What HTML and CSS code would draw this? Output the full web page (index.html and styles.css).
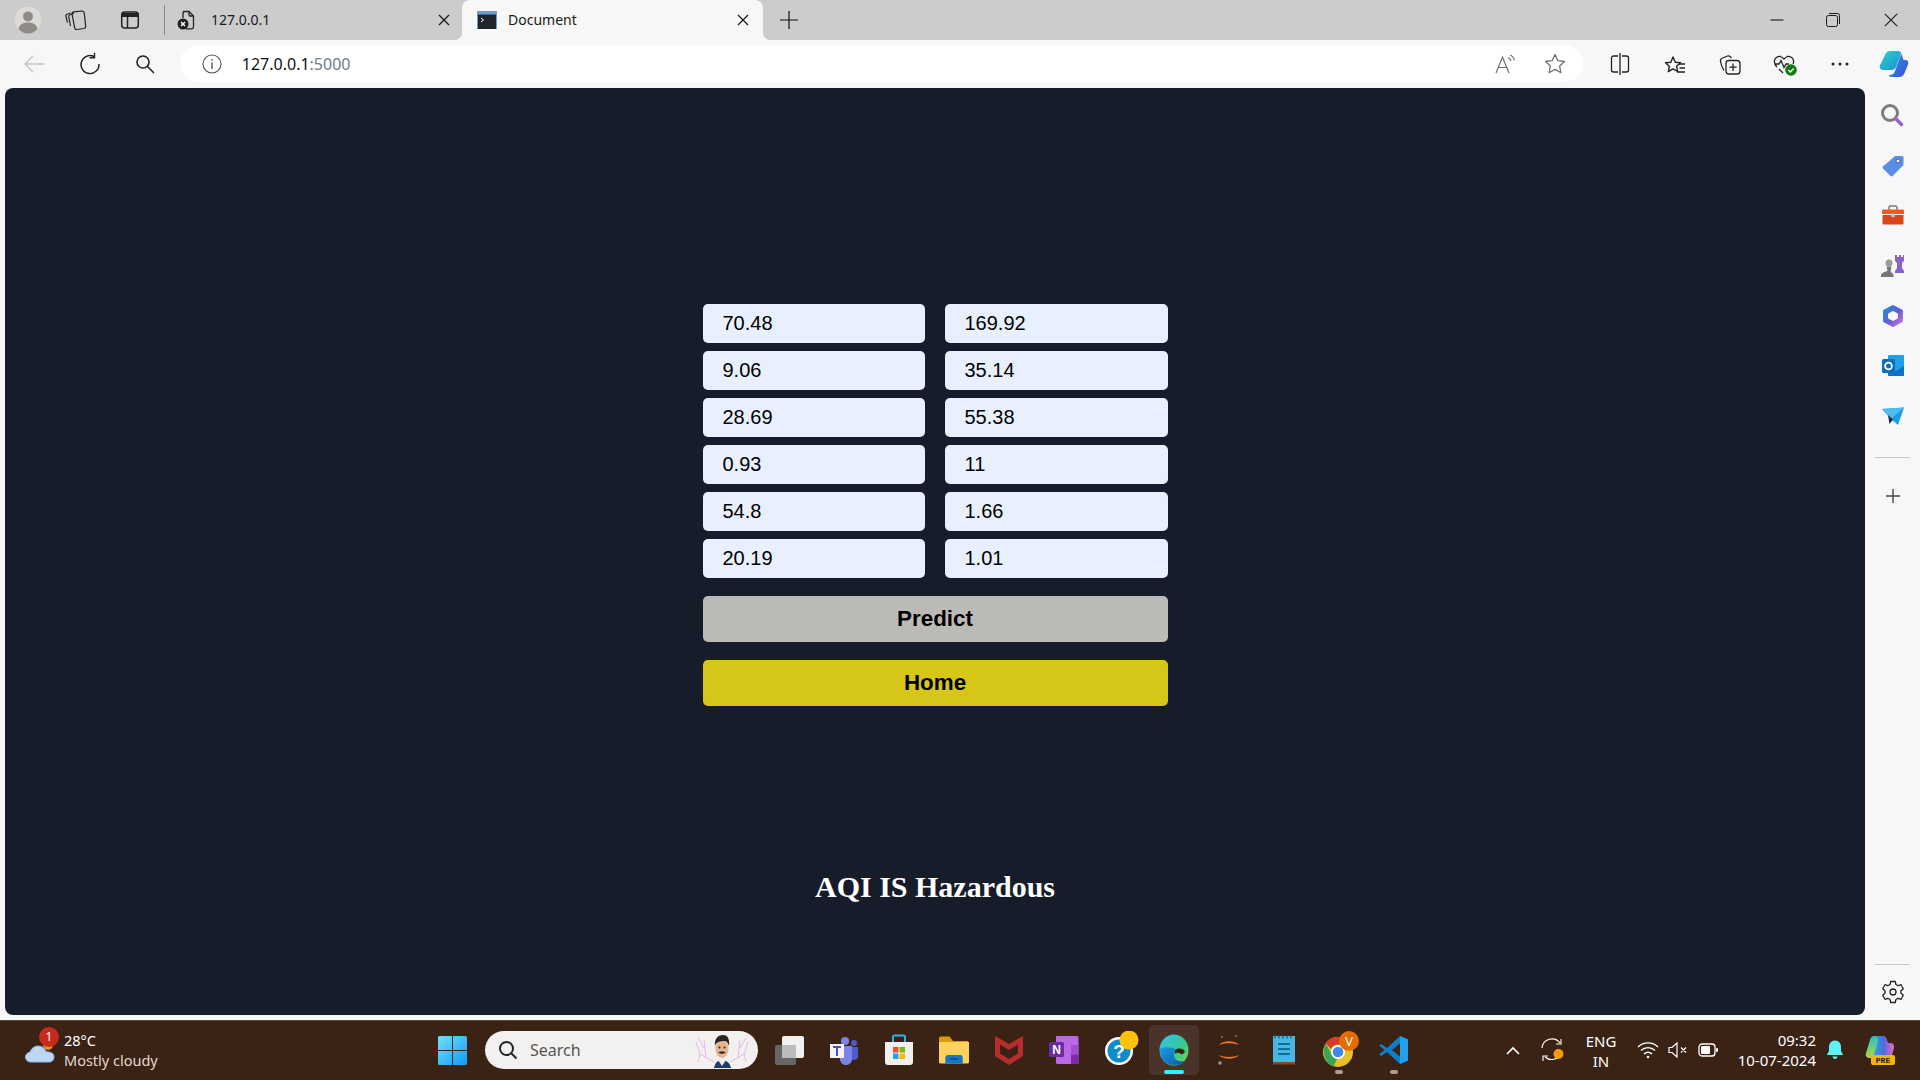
FILE: index.html
```html
<!DOCTYPE html>
<html lang="en">
<head>
    <meta charset="UTF-8">
    <meta name="viewport" content="width=device-width, initial-scale=1.0">
    <title>Document</title>
    <link rel="stylesheet" href="styles.css">
</head>
<body>
    <!-- browser tabs -->
    <div class="tabbar">
        <div class="tb-avatar">
            <svg width="28" height="28" viewBox="0 0 28 28"><circle cx="14" cy="14" r="13.500" fill="#dcdad6"/><circle cx="14" cy="10.500" r="5" fill="#8f8b86"/><path d="M4.500 23c1-5 5-6.500 9.500-6.500s8.500 1.500 9.500 6.500c-2.500 3-6 4.500-9.500 4.500s-7-1.500-9.500-4.500z" fill="#8f8b86"/></svg>
        </div>
        <div class="tb-coll">
            <svg width="24" height="24" viewBox="0 0 24 24" fill="none" stroke="#222" stroke-width="1.200"><path d="M3.500 14.500L2 8.500c-.3-1.200.3-2.200 1.500-2.500l3-1"/><path d="M6.500 18L4.800 9c-.2-1.300.4-2.200 1.700-2.500L10 5.500"/><path d="M10 3.800l8-.8c1.200 0 2 .6 2.200 1.800l1.500 13.500c.1 1.200-.6 2-1.800 2.200l-7 1c-1.200.1-2-.5-2.200-1.700L8 6c-.1-1.200.7-2 2-2.200z"/></svg>
        </div>
        <div class="tb-panel">
            <svg width="20" height="20" viewBox="0 0 20 20"><rect x="1.700" y="2" width="16.600" height="16" rx="3" fill="none" stroke="#222" stroke-width="1.500"/><path d="M2 3h16v4H2z" fill="#222"/><path d="M7.500 7v11" stroke="#222" stroke-width="1.500"/></svg>
        </div>
        <div class="tb-sep"></div>
        <div class="tab">
            <svg class="favicon" width="18" height="20" viewBox="0 0 18 20"><path d="M6 1.500h6l4.500 4.500v11a1.800 1.800 0 0 1-1.800 1.800H9" fill="none" stroke="#222" stroke-width="1.300"/><path d="M6 8V3.300A1.800 1.800 0 0 1 7 1.600M12 1.500v3.200c0 .8.500 1.300 1.300 1.300h3.200" fill="none" stroke="#222" stroke-width="1.300"/><circle cx="6" cy="14" r="5.500" fill="#222"/><path d="M4 12l4 4M8 12l-4 4" stroke="#fff" stroke-width="1.400"/></svg>
            <span class="tab-title">127.0.0.1</span>
            <svg class="tab-close" width="12" height="12" viewBox="0 0 12 12"><path d="M1 1l10 10M11 1L1 11" stroke="#1a1a1a" stroke-width="1.300"/></svg>
        </div>
        <div class="tab tab-active">
            <svg class="favicon" width="20" height="20" viewBox="0 0 20 20"><rect x=".5" y="1" width="19" height="18" fill="#20242b"/><rect x=".5" y="1" width="19" height="3.500" fill="#6d9bd6"/><path d="M.5 4v15M19.500 4v15" stroke="#6d9bd6"/><path d="M4 8l2.500 2L4 12" fill="none" stroke="#fff"/></svg>
            <span class="tab-title">Document</span>
            <svg class="tab-close" width="12" height="12" viewBox="0 0 12 12"><path d="M1 1l10 10M11 1L1 11" stroke="#1a1a1a" stroke-width="1.300"/></svg>
        </div>
        <div class="tb-new">
            <svg width="20" height="20" viewBox="0 0 20 20"><path d="M1 10h18M10 1v18" stroke="#111" stroke-width="1.200"/></svg>
        </div>
        <div class="win-controls">
            <div class="win-btn win-min"><svg width="14" height="14" viewBox="0 0 14 14"><path d="M.5 7h13" stroke="#1a1a1a" stroke-width="1.100"/></svg></div>
            <div class="win-btn"><svg width="14" height="14" viewBox="0 0 14 14" fill="none" stroke="#1a1a1a" stroke-width="1"><rect x=".5" y="2.500" width="11" height="11" rx="2"/><path d="M3 .5h8.500a2 2 0 0 1 2 2V11"/></svg></div>
            <div class="win-btn"><svg width="14" height="14" viewBox="0 0 14 14"><path d="M.8.8l12.400 12.400M13.200.8L.8 13.200" stroke="#1a1a1a" stroke-width="1.100"/></svg></div>
        </div>
    </div>

    <!-- address bar row -->
    <div class="toolbar">
        <div class="tool tool-back">
            <svg width="22" height="20" viewBox="0 0 22 20"><path d="M21 10H2M10 2l-8 8 8 8" fill="none" stroke="#c4c4c4" stroke-width="1.400"/></svg>
        </div>
        <div class="tool tool-reload">
            <svg width="22" height="24" viewBox="0 0 22 24" fill="none" stroke="#222" stroke-width="1.400"><path d="M15 4.500A9 9 0 1 0 20 12"/><path d="M15.500 0.800v5h-5"/></svg>
        </div>
        <div class="tool tool-zoom">
            <svg width="20" height="20" viewBox="0 0 20 20" fill="none" stroke="#222" stroke-width="1.600"><circle cx="8" cy="8" r="6"/><path d="M12.500 12.500l6.500 6.500"/></svg>
        </div>
        <div class="address">
            <svg width="20" height="20" viewBox="0 0 20 20" fill="none" stroke="#555" stroke-width="1.100"><circle cx="10" cy="10" r="9"/><path d="M10 8.500V15M10 5v1.500" stroke-width="1.400"/></svg>
            <span class="url">127.0.0.1<span class="url-port">:5000</span></span>
            <div class="address-right">
                <svg width="22" height="20" viewBox="0 0 22 20" fill="none" stroke="#707070" stroke-width="1.200"><path d="M1 19L7.500 3 14 19M3.300 13.500h8.400"/><path d="M13 3.500c1.700.7 2.700 1.800 3 3.500M15 1c2.500 1 4 3 4.500 5.500"/></svg>
                <svg width="22" height="22" viewBox="0 0 22 22"><path d="M11 1.500l2.900 6.200 6.600.8-4.900 4.500 1.300 6.700L11 16.400l-5.900 3.300 1.300-6.700L1.500 8.500l6.600-.8z" fill="none" stroke="#707070" stroke-width="1.300" stroke-linejoin="round"/></svg>
            </div>
        </div>
        <div class="tools-right">
            <div class="tool-r"><svg width="20" height="22" viewBox="0 0 20 22" fill="none" stroke="#222" stroke-width="1.300"><path d="M8 3H3.500A2 2 0 0 0 1.500 5v12a2 2 0 0 0 2 2H8M12 3h4.500a2 2 0 0 1 2 2v12a2 2 0 0 1-2 2H12M10 0v22"/></svg></div>
            <div class="tool-r"><svg width="22" height="22" viewBox="0 0 22 22" fill="none" stroke="#222" stroke-width="1.400"><path d="M9 2l2.300 5.300 5.200.5-3.900 3.500 1 5.200L9 13.800l-4.700 2.800 1.100-5.200L1.500 7.800l5.300-.5z" stroke-linejoin="round" transform="translate(0 2)"/><path d="M15 11h6M15.500 15h5.500M13 19h8"/></svg></div>
            <div class="tool-r"><svg width="22" height="22" viewBox="0 0 22 22" fill="none" stroke="#222" stroke-width="1.300"><rect x="7" y="7.500" width="14" height="13.500" rx="3"/><path d="M14 10.500v7.500M10.300 14.200h7.400"/><path d="M5 17.500c-1.300-2-3-6-3.500-9-.3-1.800.5-3 2-3.500l5-2c1.500-.5 3 0 4 2"/></svg></div>
            <div class="tool-r">
                <svg width="24" height="24" viewBox="0 0 24 24"><path d="M4 15c-2-2-3-4-2.500-6.500C2 5.500 5 4 7.500 4.500 9 5 10 6 11 7c1-1 2-2 3.500-2.500C17 4 20 5.500 20.500 8.500c.2 1.500 0 2.500-.5 3.500M1.500 12H6l2-3.500 3 7 2-3.500h3M6 17l4 4" fill="none" stroke="#222" stroke-width="1.300"/><circle cx="18" cy="18" r="5.800" fill="#107c10"/><path d="M15.300 18l2 2 3.400-3.500" fill="none" stroke="#fff" stroke-width="1.400"/></svg>
            </div>
            <div class="tool-r"><svg width="20" height="6" viewBox="0 0 20 6" fill="#222"><circle cx="3" cy="3" r="1.500"/><circle cx="10" cy="3" r="1.500"/><circle cx="17" cy="3" r="1.500"/></svg></div>
            <div class="tool-r tool-copilot">
                <svg width="30" height="28" viewBox="0 0 30 28"><defs><linearGradient id="cpa" x1="0" y1="0" x2="1" y2="1"><stop offset="0" stop-color="#2ad3c8"/><stop offset="1" stop-color="#1b8fd8"/></linearGradient><linearGradient id="cpb" x1="0" y1="0" x2="1" y2="1"><stop offset="0" stop-color="#2e9be8"/><stop offset="1" stop-color="#3b4fd6"/></linearGradient></defs><path d="M11 1h8c1.500 0 2.500 1 3 2.500L17 17c-.8 2-2.500 3-4.500 3H4c-2.500 0-4-2.500-3-5L6 5c.8-2.500 3-4 5-4z" fill="url(#cpa)"/><path d="M19 1c2 0 3 1 3.500 3l2 6h2c2 0 3.500 2 2.500 4.500L26 22c-1 3-3 5-6 5h-7c-2 0-3-1-3-2 3 0 5-1 6-4L22 4c-.5-2-1.500-3-3-3z" fill="url(#cpb)"/></svg>
            </div>
        </div>
    </div>

    <div class="main">
        <div class="page">
            <form class="predict-form">
                <div class="fields">
                    <input type="text" value="70.48">
                    <input type="text" value="169.92">
                    <input type="text" value="9.06">
                    <input type="text" value="35.14">
                    <input type="text" value="28.69">
                    <input type="text" value="55.38">
                    <input type="text" value="0.93">
                    <input type="text" value="11">
                    <input type="text" value="54.8">
                    <input type="text" value="1.66">
                    <input type="text" value="20.19">
                    <input type="text" value="1.01">
                </div>
                <button type="submit" class="btn btn-predict">Predict</button>
                <button type="button" class="btn btn-home">Home</button>
            </form>
            <h2 class="result">AQI IS Hazardous</h2>
        </div>

        <!-- edge sidebar -->
        <div class="sidebar">
            <svg class="side-first" width="24" height="24" viewBox="0 0 24 24"><circle cx="10" cy="10" r="7.500" fill="none" stroke="#7c7c7c" stroke-width="3"/><path d="M15.500 15.500l6 6" stroke="#9a62c8" stroke-width="3.500" stroke-linecap="round"/></svg>
            <svg width="24" height="24" viewBox="0 0 24 24"><path d="M14 2h7a1.500 1.500 0 0 1 1.500 1.500V11L11.500 22a1.500 1.500 0 0 1-2 0L2 14.500a1.500 1.500 0 0 1 0-2z" fill="#5a8ee6"/><circle cx="17" cy="7" r="2" fill="#fff" stroke="#3557a8"/></svg>
            <svg width="24" height="24" viewBox="0 0 24 24"><path d="M8 6V3.500A1.500 1.500 0 0 1 9.500 2h5A1.500 1.500 0 0 1 16 3.500V6" fill="none" stroke="#7a7a7a" stroke-width="1.500"/><path d="M1 7c0-1 .5-1.500 1.500-1.500h19c1 0 1.500.5 1.500 1.500v3H1z" fill="#ea5a23"/><path d="M1.500 11h21v8c0 1-.5 1.500-1.500 1.500H3c-1 0-1.500-.5-1.500-1.500z" fill="#d8461a"/><circle cx="12" cy="11.500" r="2" fill="#c9c4bf"/></svg>
            <svg width="24" height="24" viewBox="0 0 24 24"><path d="M14 1h2v2h2V1h2v2h2V1h1v6l-2 2v5l2 3v2h-9v-2l2-3V9l-2-2z" fill="#8a62c4"/><circle cx="8" cy="9" r="3.500" fill="#9a9a9a"/><path d="M5.500 12.500h5l-1 5 3 3v2.500H0v-2.500l3-2.500 3.500-1z" fill="#777"/></svg>
            <svg width="24" height="24" viewBox="0 0 24 24"><defs><linearGradient id="m3" x1="0" y1="0" x2="1" y2="1"><stop offset="0" stop-color="#1f8fd8"/><stop offset=".55" stop-color="#6a5bd0"/><stop offset="1" stop-color="#c77ee0"/></linearGradient></defs><path d="M12 2.500l8.500 4.500v10L12 21.500 3.500 17V7z" fill="url(#m3)" stroke="url(#m3)" stroke-width="3" stroke-linejoin="round"/><path d="M12 7.500l4.500 2.300v4.400L12 16.500l-4.500-2.300V9.800z" fill="#f7f7f7" stroke="#f7f7f7" stroke-linejoin="round"/></svg>
            <svg width="24" height="24" viewBox="0 0 24 24"><path d="M8 1h14a1 1 0 0 1 1 1v19a1 1 0 0 1-1 1H8a1 1 0 0 1-1-1V2a1 1 0 0 1 1-1z" fill="#1fa0e4"/><path d="M7 12l8 5 8-5v9a1 1 0 0 1-1 1H8a1 1 0 0 1-1-1z" fill="#0d73c4"/><rect x="1" y="5" width="13" height="14" rx="1.500" fill="#0f6cbd"/><circle cx="7.500" cy="12" r="3.400" fill="none" stroke="#fff" stroke-width="1.800"/></svg>
            <svg width="24" height="24" viewBox="0 0 24 24"><path d="M1 5l22-1.500L17 21l-7-6z" fill="#1b9de2"/><path d="M1 5l9 10 13-11.500z" fill="#4dbdf0"/><path d="M7 11l1.500 9 3.500-4.500z" fill="#1d2a52"/></svg>
            <div class="side-divider side-divider-mid"></div>
            <svg width="24" height="24" viewBox="0 0 24 24"><path d="M5 12h14M12 5v14" stroke="#444" stroke-width="1.400"/></svg>
            <div class="side-bottom">
                <div class="side-divider"></div>
                <svg width="24" height="24" viewBox="0 0 24 24"><path d="M9.700 1.500h4.600l.6 3 2.200 1.200 2.900-1 2.300 4-2.300 2v2.600l2.300 2-2.300 4-2.900-1-2.200 1.200-.6 3H9.700l-.6-3-2.200-1.200-2.900 1-2.300-4 2.300-2v-2.600l-2.300-2 2.300-4 2.900 1 2.200-1.200z" fill="none" stroke="#222" stroke-width="1.300" stroke-linejoin="round"/><circle cx="12" cy="12" r="3" fill="none" stroke="#222" stroke-width="1.300"/></svg>
            </div>
        </div>
    </div>

    <!-- windows taskbar -->
    <div class="taskbar">
        <div class="weather">
            <div class="weather-icon">
                <svg width="34" height="34" viewBox="0 0 34 34"><circle cx="24" cy="12" r="5" fill="#f08a24"/><path d="M7 29c-3.500 0-5.500-2.300-5.500-5 0-2.600 2-4.600 4.500-4.800C7 15.500 10.500 13 14 13c4 0 7 2.300 8 5.800 4 0 8 1 8 5.200 0 3-2 5-5 5z" fill="#bcd6f3" stroke="#8fb7e8"/></svg>
                <span class="weather-badge">1</span>
            </div>
            <div class="weather-text">
                <span class="weather-temp">28°C</span>
                <span class="weather-desc">Mostly cloudy</span>
            </div>
        </div>
        <svg class="start" width="29" height="29" viewBox="0 0 29 29"><defs><linearGradient id="win" x1="0" y1="0" x2="1" y2="1"><stop offset="0" stop-color="#6fe0fb"/><stop offset="1" stop-color="#0f9cf5"/></linearGradient></defs><path d="M0 1.500A1.500 1.500 0 0 1 1.500 0H14v14H0zM15 0h12.500A1.500 1.500 0 0 1 29 1.500V14H15zM0 15h14v14H1.500A1.500 1.500 0 0 1 0 27.500zM15 15h14v12.500a1.500 1.500 0 0 1-1.500 1.500H15z" fill="url(#win)"/></svg>
        <div class="search">
            <svg width="20" height="20" viewBox="0 0 20 20" fill="none" stroke="#222" stroke-width="2"><circle cx="8.500" cy="8.500" r="6.500"/><path d="M13.500 13.500l5 5"/></svg>
            <span class="search-text">Search</span>
            <svg class="search-pic" width="60" height="36" viewBox="0 0 60 36"><g fill="none" stroke="#e4b6f0" stroke-width="1"><path d="M22 30L8 22M8 22L4 10M8 22l-2 8M14 26L12 8M12 16L6 6"/><path d="M38 30l14-8M52 22l4-12M52 22l2 8M46 26l2-18M48 16l6-10"/></g><path d="M22 36c1-6 5-8 8-8s8 2 9 8z" fill="#1f3c68"/><path d="M26 28h8l-4 6z" fill="#f0ece6"/><ellipse cx="30" cy="17" rx="6.500" ry="9" fill="#e2b48f"/><path d="M23 14c-1-8 4-11 8-11s7 3 6 11c-1-3-2-5-5-5-4 0-8 1-9 5z" fill="#2a2320"/><path d="M26 20.500c2-1.500 6-1.500 8 0l-4 1.500z" fill="#2a2320"/><circle cx="27.500" cy="15.500" r="1" fill="#2a2320"/><circle cx="32.500" cy="15.500" r="1" fill="#2a2320"/></svg>
        </div>
        <div class="apps">
            <div class="app">
                <svg width="30" height="30" viewBox="0 0 30 30"><rect x="1" y="10" width="21" height="20" rx="2" fill="#666"/><rect x="8" y="1" width="22" height="22" rx="2" fill="#f1f1f1"/><rect x="8" y="10" width="14" height="13" fill="#bcbcbc"/></svg>
            </div>
            <div class="app">
                <svg width="30" height="30" viewBox="0 0 30 30"><circle cx="16" cy="6" r="4" fill="#7b83eb"/><circle cx="25" cy="8" r="3" fill="#5059c9"/><path d="M21 12h8v9a4 4 0 0 1-8 0z" fill="#5059c9"/><path d="M10 11h13v12a6 6 0 0 1-12 2z" fill="#7b83eb"/><rect x="1" y="9" width="14" height="14" fill="#f4f4f8"/><path d="M4 12h8M8 12v9" stroke="#4b53bc" stroke-width="2"/></svg>
            </div>
            <div class="app">
                <svg width="30" height="32" viewBox="0 0 30 32"><path d="M9 8V3a1.500 1.500 0 0 1 1.500-1.500h9A1.500 1.500 0 0 1 21 3v5" fill="none" stroke="#28b4e8" stroke-width="2"/><path d="M1 8h28v20a3 3 0 0 1-3 3H4a3 3 0 0 1-3-3z" fill="#efefef"/><rect x="9" y="13" width="5.500" height="5.500" fill="#e8532b"/><rect x="15.500" y="13" width="5.500" height="5.500" fill="#7fb900"/><rect x="9" y="19.500" width="5.500" height="5.500" fill="#1fa2ea"/><rect x="15.500" y="19.500" width="5.500" height="5.500" fill="#fdb900"/></svg>
            </div>
            <div class="app">
                <svg width="30" height="30" viewBox="0 0 30 30"><path d="M0 3a1.500 1.500 0 0 1 1.500-1.500h9L14 6h15v3H0z" fill="#d89b0a"/><path d="M0 7h30v20a1.500 1.500 0 0 1-1.500 1.500h-27A1.500 1.500 0 0 1 0 27z" fill="#fcd15c"/><path d="M5 28.500V23a3 3 0 0 1 3-3h14a3 3 0 0 1 3 3v5.500z" fill="#1476c8" transform="translate(2 0) scale(.87 1)"/><path d="M11 24h8" stroke="#0a3f78" stroke-width="1.200"/></svg>
            </div>
            <div class="app">
                <svg width="28" height="30" viewBox="0 0 28 30"><path d="M0 1l14 8 14-8v20L14 30 0 21z" fill="#b72d2d"/><path d="M5 9.500l9 5.500 9-5.500v9L14 24l-9-5.500z" fill="#3a2215"/></svg>
            </div>
            <div class="app">
                <svg width="30" height="30" viewBox="0 0 30 30"><path d="M7 1h21a1.500 1.500 0 0 1 1.500 1.500v25a1.500 1.500 0 0 1-1.500 1.500H8.500A1.500 1.500 0 0 1 7 27.500z" fill="#b968e6"/><rect x="22" y="10" width="7.500" height="9.500" fill="#a14fd0"/><rect x="22" y="19.500" width="7.500" height="9.500" fill="#7c2ca8"/><rect x="0" y="7" width="15" height="15" rx="1.500" fill="#6a2aa0"/><text class="app-letter" x="7.500" y="19">N</text></svg>
            </div>
            <div class="app">
                <svg width="40" height="38" viewBox="0 0 40 38"><circle cx="20" cy="20" r="14" fill="#fff"/><circle cx="20" cy="20" r="11.500" fill="#118cc6"/><text class="app-help" x="20" y="27">?</text><circle cx="30" cy="9" r="9.500" fill="#fdc30c"/></svg>
            </div>
            <div class="app app-active">
                <svg width="30" height="32" viewBox="0 0 30 32"><defs><linearGradient id="ed1" x1="0" y1="0" x2="1" y2="1"><stop offset="0" stop-color="#35c1f1"/><stop offset=".6" stop-color="#36c98b"/><stop offset="1" stop-color="#7cdb4c"/></linearGradient><linearGradient id="ed2" x1="0" y1="0" x2="1" y2="1"><stop offset="0" stop-color="#1b9de2"/><stop offset="1" stop-color="#0c59a4"/></linearGradient></defs><ellipse cx="15" cy="16" rx="14.500" ry="15.500" fill="url(#ed1)"/><path d="M1 15C1 27 9 31 15 31c5 0 8-1 11-4-4 1-10 0-11-5-.6-3 1-5.500 3-6-5-4-17-3-17-1z" fill="url(#ed2)"/><path d="M15.500 20c0-3.500 2-5.500 4.500-5.500 2.800 0 5 1.300 6 3-1 2.500-3 3-4.500 2.500-1-2-5-1.500-6 0z" fill="#3a2215"/></svg>
                <span class="active-bar"></span>
            </div>
            <div class="app">
                <svg width="26" height="34" viewBox="0 0 26 34"><path d="M3 12c4-5 16-5 20 0-5-2.500-15-2.500-20 0z" fill="#f0772a"/><path d="M3 22c4 5 16 5 20 0-5 2.500-15 2.500-20 0z" fill="#f0772a"/><circle cx="6" cy="4" r="1" fill="#8a7a70"/><circle cx="20" cy="3" r="1" fill="#8a7a70"/><circle cx="4" cy="30" r="1.800" fill="#9a9a9a"/></svg>
            </div>
            <div class="app">
                <svg width="24" height="32" viewBox="0 0 24 32"><rect x="1" y="2" width="22" height="28" fill="#4ab8de"/><rect x="1" y="28" width="22" height="2.500" fill="#8a4a1f"/><path d="M3 1.500v3M7 1.500v3M11 1.500v3M15 1.500v3M19 1.500v3" stroke="#0f6f9c" stroke-width="1.500"/><path d="M6 10h12M6 15h12M6 20h12" stroke="#0f6f9c" stroke-width="2"/></svg>
            </div>
            <div class="app">
                <svg width="42" height="38" viewBox="0 0 42 38"><circle cx="20" cy="21" r="15" fill="#e8c02a"/><path d="M20 6a15 15 0 0 1 13 7.500H20a7.500 7.500 0 0 0-7 4.500L7.500 12A15 15 0 0 1 20 6z" fill="#d93b2b"/><path d="M7.500 12L14 24a7.500 7.500 0 0 0 5 4l-3.500 7.500C8 33 3 22 7.500 12z" fill="#3aa457"/><circle cx="20" cy="21" r="7" fill="#fff"/><circle cx="20" cy="21" r="5.300" fill="#3f8ae8"/><circle cx="31" cy="10" r="10" fill="#e56d00"/><text class="app-v" x="31" y="14.500">V</text></svg>
                <span class="run-dot"></span>
            </div>
            <div class="app">
                <svg width="30" height="30" viewBox="0 0 30 30"><path d="M21 1l8 3.500v21L21 29 8 17 2.500 21 0 19.500 5.500 15 0 10.500 2.500 9 8 13z" fill="#0e7ec9"/><path d="M21 1l8 3.500v21L21 29z" fill="#22a0ec"/><path d="M21 8.500L13 15l8 6.500z" fill="#3a2215"/></svg>
                <span class="run-dot"></span>
            </div>
        </div>
        <div class="tray">
            <div class="tray-caret"><svg width="14" height="9" viewBox="0 0 14 9"><path d="M1 8l6-6 6 6" fill="none" stroke="#fff" stroke-width="1.600"/></svg></div>
            <div class="tray-sync">
                <svg width="24" height="24" viewBox="0 0 24 24" fill="none" stroke="#fff" stroke-width="1.100"><path d="M1 10a10 10 0 0 1 18-5M20 1v5h-5"/><path d="M20 15a10 10 0 0 1-16 4M2 23v-5h5"/><circle cx="17.500" cy="16" r="5" fill="#f59a0c" stroke="none"/></svg>
            </div>
            <div class="tray-lang"><span>ENG</span><span>IN</span></div>
            <div class="tray-wifi"><svg width="22" height="18" viewBox="0 0 22 18" fill="none" stroke="#fff" stroke-width="1.300"><path d="M1 6a14 14 0 0 1 20 0M4 9.500a10 10 0 0 1 14 0M7 13a5.500 5.500 0 0 1 8 0"/><circle cx="11" cy="16" r="1.300" fill="#fff" stroke="none"/></svg></div>
            <div class="tray-vol"><svg width="20" height="16" viewBox="0 0 20 16" fill="none" stroke="#fff" stroke-width="1.200"><path d="M1 5.500v5h3l5 4.500V1L4 5.500zM13 5.500l5 5M18 5.500l-5 5"/></svg></div>
            <div class="tray-batt"><svg width="21" height="14" viewBox="0 0 21 14"><rect x="1" y="1" width="16" height="12" rx="3" fill="none" stroke="#fff" stroke-width="1.300"/><rect x="3" y="3" width="9" height="8" rx="1" fill="#fff"/><rect x="18" y="5" width="2" height="4" rx="1" fill="#fff"/></svg></div>
            <div class="clock"><span>09:32</span><span>10-07-2024</span></div>
            <div class="tray-bell"><svg width="18" height="20" viewBox="0 0 18 20"><path d="M9 .5C5 .5 3 3.500 3 7v4L.8 15h16.400L15 11V7C15 3.500 13 .5 9 .5z" fill="#5ff0f7"/><path d="M6.500 16.500a2.500 2.500 0 0 0 5 0z" fill="#5ff0f7"/></svg></div>
            <div class="tray-copilot">
                <svg width="30" height="30" viewBox="0 0 30 30"><defs><linearGradient id="cp2" x1="0" y1="0" x2="1" y2="0"><stop offset="0" stop-color="#28a8e8"/><stop offset=".5" stop-color="#4a6be0"/><stop offset="1" stop-color="#e86ac8"/></linearGradient><linearGradient id="cp3" x1="0" y1="0" x2="0" y2="1"><stop offset="0" stop-color="#28c3c8"/><stop offset="1" stop-color="#b5d334"/></linearGradient></defs><path d="M10 1h8c2 0 3 1 3.500 2.500L23 8h2c3 0 4.500 2 4 5l-2 7c-1 2-2 3-4 3H8z" fill="url(#cp2)"/><path d="M9 1C7 1 5.700 2.500 5 5L1 18c-1 3 1 5 4 5h3l5-17c.5-2.500-1-5-4-5z" fill="url(#cp3)"/><rect x="6" y="20" width="24" height="10" rx="2" fill="#f4b400"/><text class="pre-text" x="18" y="28">PRE</text></svg>
            </div>
        </div>
    </div>
</body>
</html>
```

FILE: styles.css
```css
* {
    box-sizing: border-box;
}
html, body {
    height: 100%;
}
body {
    margin: 0;
    display: flex;
    flex-direction: column;
    height: 1080px;
    overflow: hidden;
    font-family: "Noto Sans", "Open Sans", sans-serif;
    background-color: #f7f7f7;
    color: #1a1a1a;
}

/* tabs */
.tabbar {
    display: flex;
    align-items: center;
    height: 40px;
    flex-shrink: 0;
    background-color: #cccccc;
}
.tabbar > div {
    display: flex;
    align-items: center;
    justify-content: center;
    height: 100%;
}
.tb-avatar { width: 56px; }
.tb-coll { width: 40px; }
.tb-panel { width: 68px; }
.tabbar > .tb-sep {
    width: 1px;
    height: 30px;
    background-color: #8a8a8a;
}
.tabbar > .tab {
    width: 297px;
    justify-content: flex-start;
    padding: 0 12px 0 12px;
}
.favicon {
    flex-shrink: 0;
    margin-right: 16px;
}
.tab-title {
    flex: 1;
    margin-top: -2px;
    font-size: 14px;
}
.tabbar > .tab-active {
    position: relative;
    width: 301px;
    padding: 0 14px 0 15px;
    background-color: #f7f7f7;
    border-radius: 8px 8px 0 0;
}
.tab-active .favicon {
    margin-right: 11px;
}
.tab-active::before,
.tab-active::after {
    content: "";
    position: absolute;
    bottom: 0;
    width: 8px;
    height: 8px;
}
.tab-active::before {
    left: -8px;
    background: radial-gradient(circle at 0 0, transparent 8px, #f7f7f7 8.500px);
}
.tab-active::after {
    right: -8px;
    background: radial-gradient(circle at 100% 0, transparent 8px, #f7f7f7 8.500px);
}
.tb-new { width: 52px; }
.tabbar > .win-controls {
    margin-left: auto;
    width: 170px;
}
.win-btn {
    display: flex;
    align-items: center;
    justify-content: center;
    width: 58px;
}
.win-min {
    width: 54px;
}

/* toolbar */
.toolbar {
    display: flex;
    align-items: center;
    height: 48px;
    flex-shrink: 0;
}
.tool {
    display: flex;
    justify-content: center;
}
.tool-back { width: 52px; margin-left: 8px; }
.tool-reload { width: 60px; }
.tool-zoom { width: 50px; }
.address {
    display: flex;
    align-items: center;
    width: 1405px;
    height: 37px;
    margin-left: 10px;
    margin-top: -1px;
    padding: 0 17px 0 22px;
    background-color: #fff;
    border-radius: 19px;
}
.url {
    margin-left: 20px;
    font-size: 16px;
    color: #111;
}
.url-port {
    color: #6f7a88;
}
.address-right {
    display: flex;
    align-items: center;
    gap: 27px;
    margin-left: auto;
}
.tools-right {
    display: flex;
    margin-left: 9px;
}
.tool-r {
    display: flex;
    align-items: center;
    justify-content: center;
    width: 55px;
}
.tool-copilot {
    width: 53px;
}

/* page */
.main {
    display: flex;
    flex: 1;
    min-height: 0;
}
.page {
    display: flex;
    flex-direction: column;
    align-items: center;
    width: 1860px;
    height: 927px;
    margin-left: 5px;
    padding-top: 216px;
    background-color: #161c2a;
    border-radius: 8px;
}
.predict-form {
    width: 465px;
}
.fields {
    display: grid;
    grid-template-columns: 222px 223px;
    column-gap: 20px;
    row-gap: 8px;
}
.fields input {
    height: 39px;
    width: 100%;
    padding: 0 20px;
    font-family: "Liberation Sans", Arial, sans-serif;
    font-size: 20px;
    color: #000;
    background-color: #e8f0fe;
    border: none;
    border-radius: 5px;
    outline: none;
}
.btn {
    display: block;
    width: 100%;
    height: 46px;
    margin-top: 18px;
    font-family: "Liberation Sans", Arial, sans-serif;
    font-size: 22.400px;
    font-weight: bold;
    color: #000;
    border: none;
    border-radius: 5px;
    cursor: pointer;
}
.btn-predict {
    background-color: #bcbab7;
}
.btn-home {
    background-color: #d6c618;
}
.result {
    margin: 164px 0 0;
    font-family: "Liberation Serif", "Times New Roman", serif;
    font-size: 30px;
    font-weight: bold;
    color: #fff;
}

/* sidebar */
.sidebar {
    display: flex;
    flex-direction: column;
    align-items: center;
    gap: 26px;
    width: 55px;
    padding: 16px 0 16px;
}
.sidebar svg {
    flex-shrink: 0;
}
.side-first {
    margin-top: -1px;
    margin-bottom: 1px;
    margin-right: 2px;
}
.side-divider {
    width: 35px;
    height: 1px;
    background-color: #c8c8c8;
}
.side-divider-mid {
    margin-top: 3px;
}
.side-bottom {
    display: flex;
    flex-direction: column;
    align-items: center;
    gap: 15px;
    margin-top: auto;
}

/* taskbar */
.taskbar {
    display: flex;
    align-items: center;
    height: 60px;
    flex-shrink: 0;
    padding-bottom: 1px;
    background-color: #3a2215;
    border-top: 1px solid #5d483c;
    color: #fff;
}
.weather {
    display: flex;
    align-items: center;
    width: 438px;
    padding-left: 24px;
}
.weather-icon {
    position: relative;
    width: 34px;
    height: 34px;
}
.weather-badge {
    position: absolute;
    top: -6px;
    left: 15px;
    width: 20px;
    height: 20px;
    font-size: 12px;
    line-height: 20px;
    text-align: center;
    background-color: #c72a1c;
    border-radius: 50%;
}
.weather-text {
    display: flex;
    flex-direction: column;
    margin-left: 6px;
    font-size: 14.500px;
    line-height: 20px;
}
.weather-desc {
    color: #e2d8d0;
}
.start {
    flex-shrink: 0;
}
.search {
    display: flex;
    align-items: center;
    width: 273px;
    height: 38px;
    margin-left: 18px;
    padding: 0 6px 0 13px;
    background-color: #f3f1ef;
    border-radius: 19px;
    overflow: hidden;
}
.search-text {
    margin-left: 12px;
    font-size: 16px;
    color: #555;
}
.search-pic {
    margin-left: auto;
}
.apps {
    display: flex;
    gap: 5px;
    margin-left: 6px;
}
.app {
    position: relative;
    display: flex;
    align-items: center;
    justify-content: center;
    width: 50px;
    height: 50px;
    border-radius: 5px;
}
.app-active {
    background-color: #4a342a;
}
.active-bar {
    position: absolute;
    left: 15px;
    bottom: 1px;
    width: 20px;
    height: 4px;
    background-color: #2ff0f7;
    border-radius: 2px;
}
.run-dot {
    position: absolute;
    left: 21px;
    bottom: 1px;
    width: 8px;
    height: 4px;
    background-color: #a89f98;
    border-radius: 2px;
}
.app-letter {
    font-family: "Liberation Sans", sans-serif;
    font-size: 12px;
    font-weight: bold;
    fill: #fff;
    text-anchor: middle;
}
.app-help {
    font-family: "Liberation Sans", sans-serif;
    font-size: 19px;
    font-weight: bold;
    fill: #fff;
    text-anchor: middle;
}
.app-v {
    font-family: "Liberation Sans", sans-serif;
    font-size: 12px;
    fill: #fff;
    text-anchor: middle;
}
.pre-text {
    font-family: "Liberation Mono", monospace;
    font-size: 8px;
    font-weight: bold;
    fill: #222;
    text-anchor: middle;
}
.tray {
    display: flex;
    align-items: center;
    margin-left: auto;
    padding-right: 14px;
    font-size: 15px;
}
.tray > div {
    display: flex;
    align-items: center;
    justify-content: center;
}
.tray-caret { width: 30px; }
.tray-sync { width: 50px; }
.tray > .tray-lang {
    flex-direction: column;
    width: 46px;
    padding-top: 1px;
    line-height: 20px;
}
.tray-wifi { width: 38px; margin-left: 5px; }
.tray-vol { width: 22px; }
.tray-batt { width: 38px; }
.tray > .clock {
    flex-direction: column;
    align-items: flex-end;
    width: 89px;
    line-height: 20px;
}
.tray-bell { width: 38px; }
.tray-copilot { width: 52px; }
```
